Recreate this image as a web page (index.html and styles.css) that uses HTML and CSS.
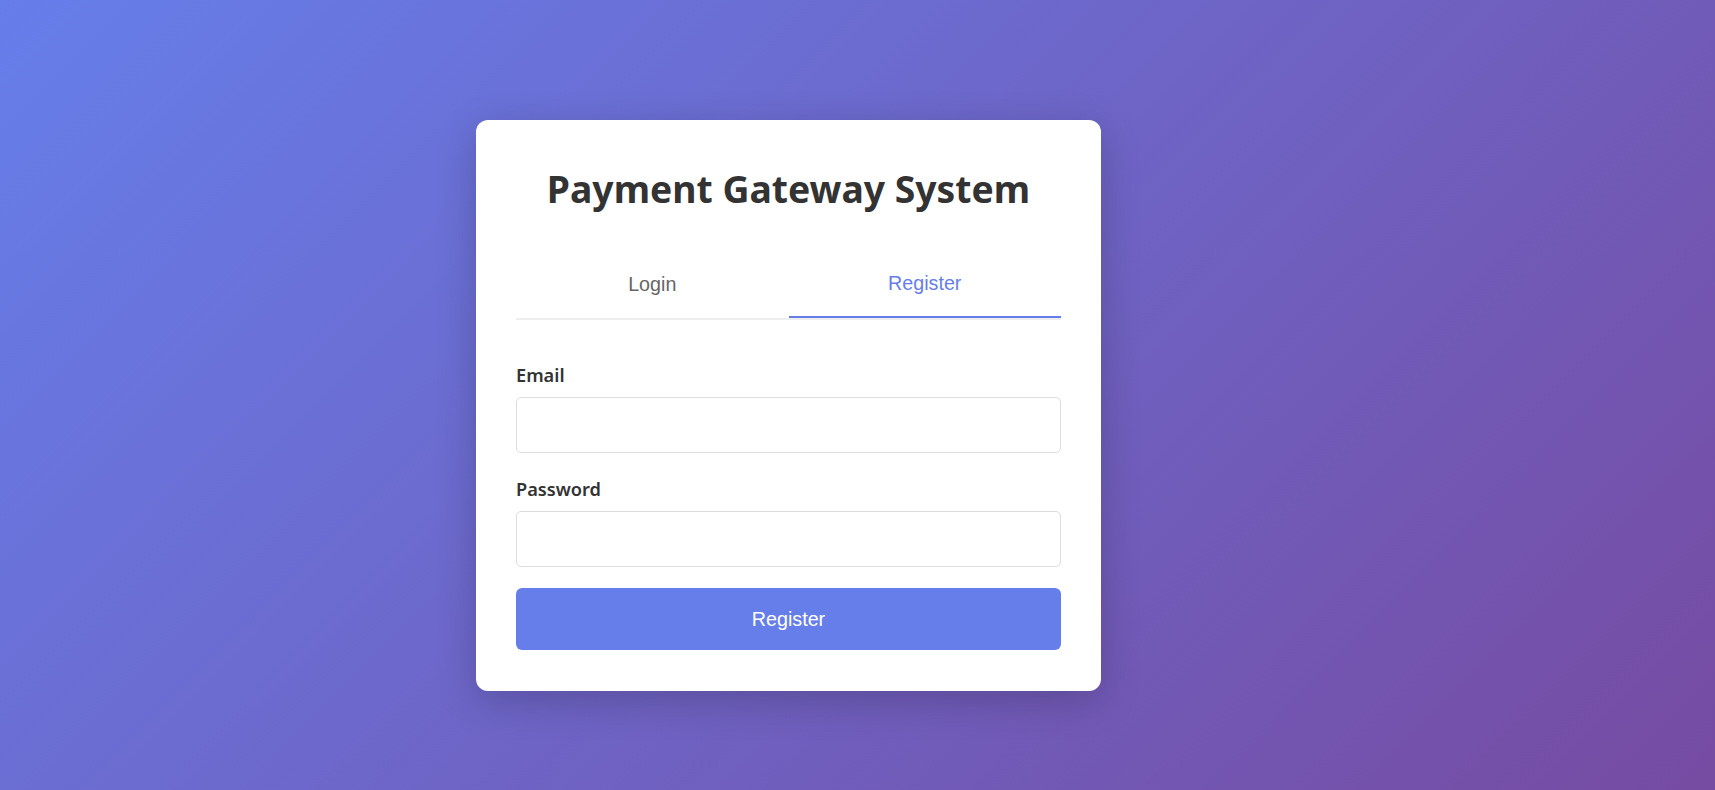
FILE: index.html
```html
<!DOCTYPE html>
<html lang="en">
<head>
<meta charset="utf-8">
<title>Payment Gateway System</title>
<link rel="stylesheet" href="styles.css">
</head>
<body>
<main class="page">
  <section class="card">
    <h1 class="title">Payment Gateway System</h1>
    <div class="tabs">
      <button class="tab" type="button">Login</button>
      <button class="tab tab-active" type="button">Register</button>
    </div>
    <form class="form">
      <div class="field">
        <label class="label" for="email">Email</label>
        <input class="input" id="email" type="email">
      </div>
      <div class="field">
        <label class="label" for="password">Password</label>
        <input class="input" id="password" type="password">
      </div>
      <button class="submit" type="button">Register</button>
    </form>
  </section>
</main>
</body>
</html>
```
FILE: styles.css
```css
* { box-sizing: border-box; }
html, body { margin: 0; padding: 0; }
body {
  min-height: 100vh;
  background: linear-gradient(135deg, #667eea 0%, #764ba2 100%);
  font-family: "Noto Sans", "Open Sans", sans-serif;
  color: #333;
}
.page {
  min-height: 100vh;
  padding: 120px 0 0 476px;
}
.card {
  width: 625px;
  background: #fff;
  border-radius: 12px;
  padding: 40px 40px 41px;
  box-shadow: 0 10px 40px rgba(0, 0, 0, 0.2);
}
.title {
  margin: 0 0 32px;
  font-size: 37.3px;
  line-height: 58px;
  font-weight: 700;
  text-align: center;
  color: #333;
}
.tabs {
  display: flex;
  border-bottom: 2px solid #eee;
}
.tab {
  flex: 1;
  height: 68px;
  padding: 0;
  border: none;
  background: none;
  font-family: "Liberation Sans", Arial, sans-serif;
  font-size: 19.7px;
  color: #666;
  cursor: pointer;
}
.tab-active {
  color: #667eea;
  border-bottom: 2px solid #667eea;
}
.form {
  margin-top: 43px;
}
.field {
  margin-bottom: 21px;
}
.label {
  display: block;
  font-size: 18.2px;
  line-height: 24px;
  font-weight: 600;
  color: #333;
  margin-bottom: 10px;
}
.field:first-child { margin-bottom: 24px; }
.input {
  display: block;
  width: 100%;
  height: 56px;
  border: 1px solid #ddd;
  border-radius: 5px;
  padding: 0 14px;
  font-size: 17px;
  background: #fff;
}
.submit {
  display: block;
  width: 100%;
  height: 62px;
  border: none;
  border-radius: 6px;
  background: #667eea;
  color: #fff;
  font-family: "Liberation Sans", Arial, sans-serif;
  font-size: 19.7px;
  cursor: pointer;
}
```
